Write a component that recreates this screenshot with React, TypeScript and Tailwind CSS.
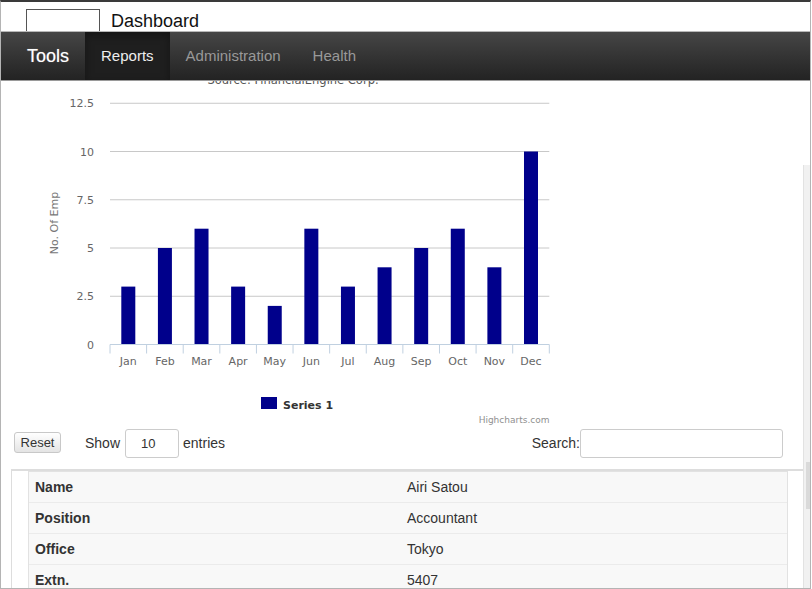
import React from "react";

const MONTHS = ["Jan", "Feb", "Mar", "Apr", "May", "Jun", "Jul", "Aug", "Sep", "Oct", "Nov", "Dec"];
const VALUES = [3, 5, 6, 3, 2, 6, 3, 4, 5, 6, 4, 10];

const ROWS = [
  ["Name", "Airi Satou"],
  ["Position", "Accountant"],
  ["Office", "Tokyo"],
  ["Extn.", "5407"],
];

// plot geometry, svg coords (svg sits at page x=1, y=71)
const LEFT = 109;
const RIGHT = 548.3;
const ZERO = 273.5;
const UNIT = 19.3;
const CAT = (RIGHT - LEFT) / 12;

function Chart() {
  const ticks = [0, 2.5, 5, 7.5, 10, 12.5];
  return (
    <svg width="560" height="358" className="block" fontFamily="'DejaVu Sans', Verdana, sans-serif">
      <text x="292" y="12.5" textAnchor="middle" fontSize="11.5" fill="#555">
        Source: FinancialEngine Corp.
      </text>

      {ticks.map((t) => {
        const y = ZERO - t * UNIT;
        return (
          <g key={t}>
            {t > 0 && <line x1={LEFT} x2={RIGHT} y1={y} y2={y} stroke="#c8c8c8" strokeWidth="1" />}
            <text x="93" y={y + 4} textAnchor="end" fontSize="11" fill="#666">
              {t}
            </text>
          </g>
        );
      })}

      <text x="57" y="152" fontSize="11" fill="#777" textAnchor="middle" transform="rotate(-90 57 152)">
        No. Of Emp
      </text>

      {VALUES.map((v, i) => {
        const cx = LEFT + CAT * (i + 0.5);
        const h = v * UNIT;
        return <rect key={i} x={cx - 7} y={ZERO - h} width="14" height={h} fill="#00008b" />;
      })}

      <line x1={LEFT} x2={RIGHT} y1={ZERO} y2={ZERO} stroke="#c0d0e0" strokeWidth="1" />
      {Array.from({ length: 13 }).map((_, k) => (
        <line key={k} x1={LEFT + CAT * k} x2={LEFT + CAT * k} y1={ZERO} y2={ZERO + 9} stroke="#c0d0e0" strokeWidth="1" />
      ))}
      {MONTHS.map((m, i) => (
        <text key={m} x={LEFT + CAT * (i + 0.5)} y="294" textAnchor="middle" fontSize="11" fill="#666">
          {m}
        </text>
      ))}

      <rect x="260" y="326" width="16" height="12" fill="#00008b" />
      <text x="282" y="337.5" fontSize="11" fontWeight="bold" fill="#333">
        Series 1
      </text>

      <text x="548.5" y="352" textAnchor="end" fontSize="9" fill="#909090">
        Highcharts.com
      </text>
    </svg>
  );
}

export default function App() {
  return (
    <div className="relative h-[589px] w-[811px] overflow-hidden border-t-2 border-l border-r border-b border-t-[#3a3a3a] border-x-[#b4b4b4] border-b-[#b4b4b4] bg-white font-['Liberation_Sans',Arial,sans-serif] text-[#333]">
      {/* header */}
      <div className="flex h-[29px] items-end pl-[25px]">
        <div className="h-[22px] w-[74px] border-x border-t border-[#555]" />
        <span className="ml-[11px] mb-px text-[18px] leading-none text-[#111]">Dashboard</span>
      </div>

      {/* navbar */}
      <nav className="relative z-10 flex h-[50px] items-stretch border-t border-b border-t-[#b8b8b8] border-b-[#9a9a9a] bg-linear-to-b from-[#464646] to-[#232323]">
        <span className="ml-[26px] mr-[16px] self-center text-[18px] text-white [text-shadow:0_0_1px_rgba(255,255,255,0.5)]">
          Tools
        </span>
        <span className="flex items-center bg-[#1f1f1f] px-[16px] text-[15px] text-[#eee] shadow-[inset_0_3px_8px_rgba(0,0,0,0.35)]">
          Reports
        </span>
        <span className="flex items-center px-[16px] text-[15px] text-[#999]">Administration</span>
        <span className="flex items-center px-[16px] text-[15px] text-[#999]">Health</span>
      </nav>

      {/* chart, its subtitle sits behind the navbar */}
      <div className="-mt-[10px]">
        <Chart />
      </div>

      {/* controls */}
      <div className="flex h-[29px] items-center text-[14px]">
        <button className="ml-[13px] -mt-[3px] h-[21px] w-[47px] rounded-[3px] border border-[#c8c8c8] bg-linear-to-b from-white to-[#e4e4e4] text-[13px] text-[#333]">
          Reset
        </button>
        <span className="ml-[24px]">Show</span>
        <div className="ml-[5px] flex h-[29px] w-[54px] items-center rounded-[3px] border border-[#ccc] pl-[15px] text-[13px]">
          10
        </div>
        <span className="ml-[4px]">entries</span>
        <div className="ml-auto mr-[27px] flex items-center">
          <span>Search:</span>
          <div className="h-[29px] w-[203px] rounded-[3px] border border-[#ccc]" />
        </div>
      </div>

      {/* table */}
      <div className="ml-[10px] mt-[11px] w-[792px] border-t-2 border-l border-[#ddd] pl-[16px] pr-[15px]">
        <div className="border-x border-t border-[#e2e2e2] bg-[#f8f8f8] text-[14px]">
          {ROWS.map(([k, v]) => (
            <div key={k} className="flex h-[31px] items-center border-b border-[#ebebeb]">
              <span className="w-[378px] pl-[6px] font-bold text-[#333]">{k}</span>
              <span className="text-[#333]">{v}</span>
            </div>
          ))}
        </div>
      </div>

      {/* scroll track on the right */}
      <div className="absolute right-0 top-[163px] bottom-0 w-[7px] border-l border-[#e2e2e2] bg-[#f1f1f1]">
        <div className="ml-[2px] mt-[297px] h-[47px] w-[4px] bg-[#dadada]" />
      </div>
    </div>
  );
}
